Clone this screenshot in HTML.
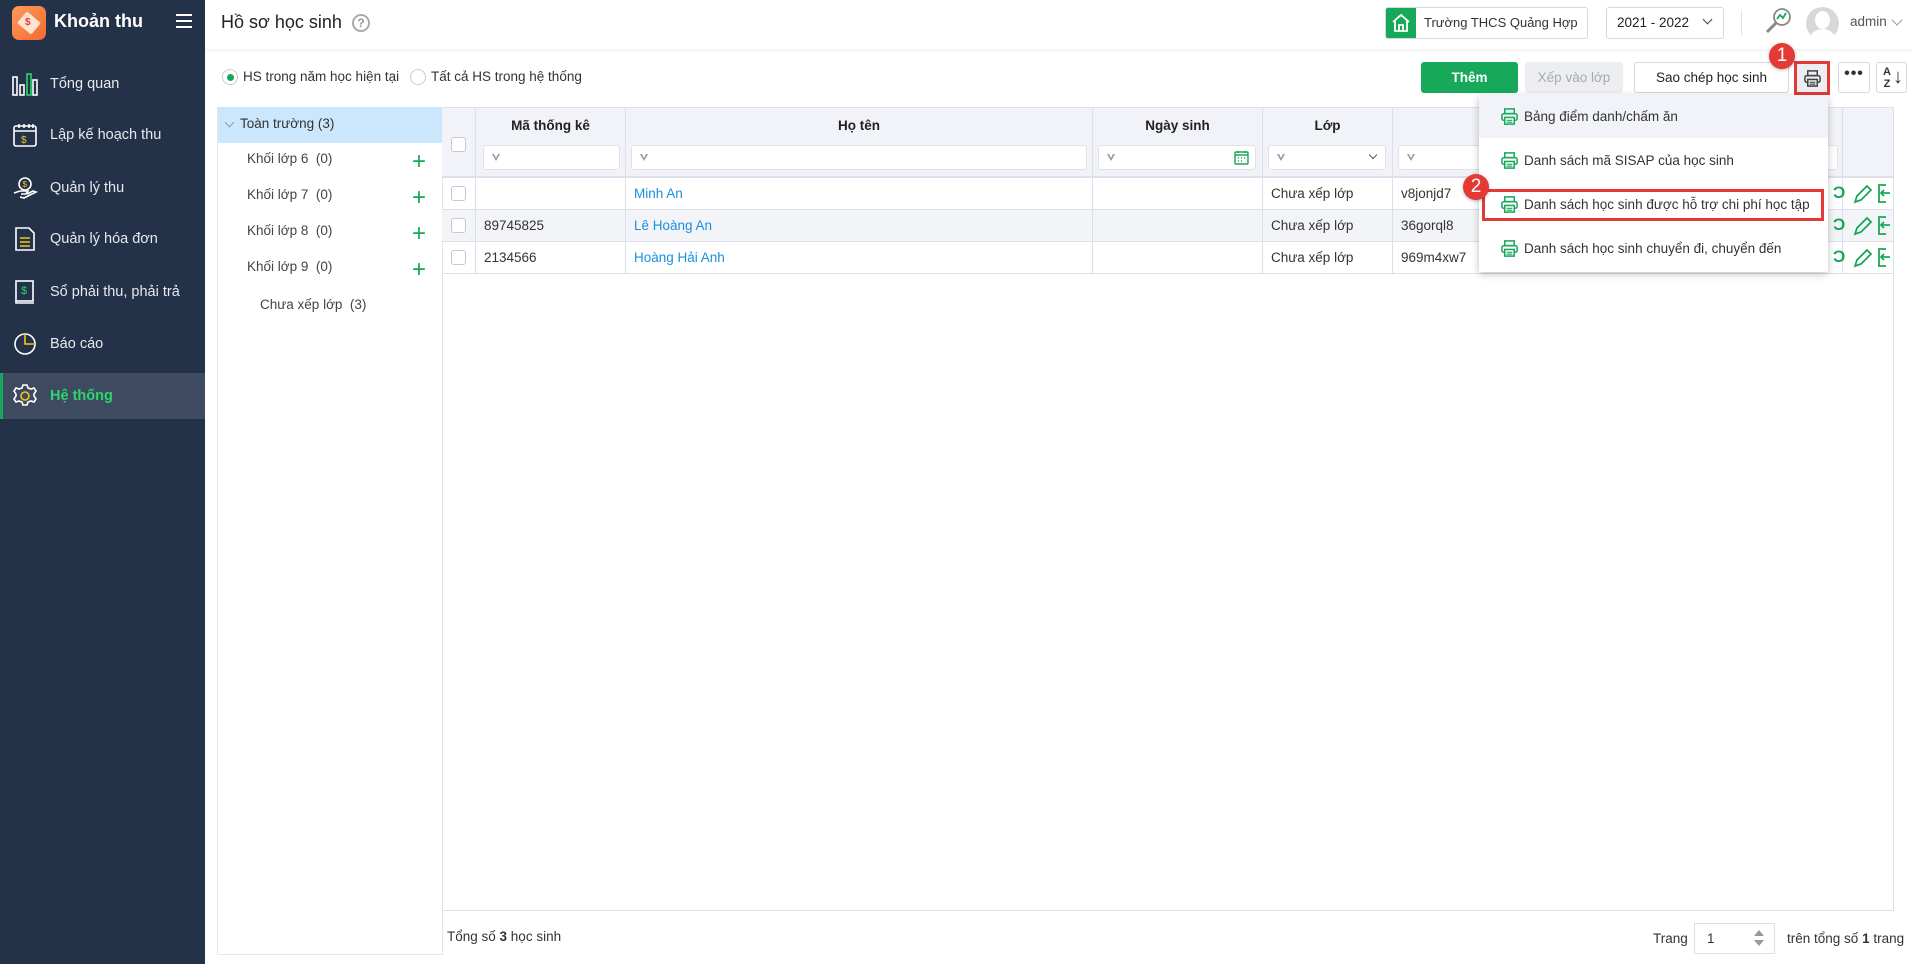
<!DOCTYPE html>
<html><head><meta charset="utf-8"><style>
*{box-sizing:border-box;margin:0;padding:0}
body{width:1913px;height:964px;overflow:hidden;font-family:"Liberation Sans","Noto Sans CJK SC",sans-serif;font-size:14px;color:#333;background:#fff;position:relative}
.abs{position:absolute}
#side{left:0;top:0;width:205px;height:964px;background:#243249}
.mi{position:absolute;left:0;width:205px;height:46px;color:#e6e9ee;font-size:14.5px;line-height:46px;padding-left:50px}
.mi svg{position:absolute;left:12px;top:10px}
.mi.act{background:#3d4a5f;color:#2ed46e;font-weight:bold;border-left:3px solid #17a85a}
#hdr{left:205px;top:0;width:1708px;height:49px;background:#fff;box-shadow:0 2px 4px rgba(0,0,0,.06)}
.btn{position:absolute;height:31px;border-radius:3px;font-size:13.5px;text-align:center;line-height:31px}
.th{position:absolute;top:0;height:69px;border-right:1px solid #dde0ea;text-align:center;font-weight:bold;font-size:13.5px;padding-top:10px;color:#222}
.flt{position:absolute;top:37px;height:25px;border:1px solid #dfe2ea;border-radius:3px;background:#fff}
.flt:before{content:"";position:absolute;left:8px;top:8px;border-left:4px solid transparent;border-right:4px solid transparent;border-top:7px solid #999}
.flt:after{content:"";position:absolute;left:10px;top:8px;border-left:2px solid transparent;border-right:2px solid transparent;border-top:4px solid #fff}
.row{position:absolute;left:0;width:1451px;height:32px;border-bottom:1px solid #dde0ea;font-size:13.5px;line-height:32px}
.c{position:absolute;top:0;height:31px;border-right:1px solid #dde0ea;padding-left:8px}
.cb{position:absolute;width:15px;height:15px;border:1px solid #c5c8d0;border-radius:3px;background:#fff}
.plus{position:absolute;left:194px;color:#17a85a;font-size:24px;line-height:20px;font-weight:300}
.dd{height:43px;position:absolute;left:0;width:349px;line-height:43px;padding-left:45px;font-size:13.5px;color:#333}
.dd svg{position:absolute;left:21px;top:12px}
.badge{position:absolute;width:26px;height:26px;border-radius:50%;background:#e53935;color:#fff;font-size:19px;text-align:center;line-height:26px;box-shadow:0 1px 3px rgba(0,0,0,.3)}
</style></head><body>
<svg width="0" height="0" style="position:absolute"><defs>
<symbol id="pr" viewBox="0 0 20 20"><rect x="5" y="2" width="10" height="5" fill="none" stroke="#17a85a" stroke-width="1.6"/><rect x="2" y="7" width="16" height="7" rx="2" fill="none" stroke="#17a85a" stroke-width="1.6"/><rect x="5" y="11" width="10" height="7" fill="#fff" stroke="#17a85a" stroke-width="1.6"/><path d="M7 14h6M7 16h6" stroke="#17a85a" stroke-width="1.2"/></symbol>
</defs></svg>

<div id="side" class="abs">
  <div class="abs" style="left:12px;top:6px;width:34px;height:34px;border-radius:7px;background:linear-gradient(135deg,#ff9a5a,#f26a2e)">
    <div class="abs" style="left:7px;top:10px;width:20px;height:14px;background:#ffe3d0;transform:skewY(-10deg) rotate(45deg);border-radius:2px"></div>
    <div class="abs" style="left:13px;top:11px;color:#e53935;font-size:10px;font-weight:bold">$</div>
  </div>
  <div class="abs" style="left:54px;top:11px;color:#fff;font-weight:bold;font-size:18px">Khoản thu</div>
  <div class="abs" style="left:176px;top:14px;width:16px;height:2px;background:#fff;box-shadow:0 6px 0 #fff,0 12px 0 #fff"></div>
  <div class="mi" style="top:61px"><svg width="26" height="26" viewBox="0 0 26 26" fill="none" stroke="#fff" stroke-width="1.6"><rect x="1" y="6" width="4" height="18"/><rect x="8" y="14" width="4" height="10"/><rect x="15" y="3" width="4" height="21" stroke="#2ed46e"/><rect x="21" y="9" width="4" height="15"/></svg>Tổng quan</div>
  <div class="mi" style="top:112px"><svg width="26" height="26" viewBox="0 0 26 26" fill="none" stroke="#fff" stroke-width="1.6"><rect x="2" y="4" width="22" height="20" rx="2"/><path d="M2 9h22M7 2v4M12 2v4M17 2v4M21 2v4"/><text x="9" y="21" font-size="10" fill="#f5c518" stroke="none" font-family="Liberation Sans">$</text></svg>Lập kế hoạch thu</div>
  <div class="mi" style="top:165px"><svg width="26" height="26" viewBox="0 0 26 26" fill="none" stroke="#fff" stroke-width="1.6"><circle cx="13" cy="9" r="6"/><path d="M2 18l6-2h8l-2 3H9M8 22l4 1 12-6-3-1-6 3"/><text x="10.5" y="12" font-size="8" fill="#f5c518" stroke="none">$</text></svg>Quản lý thu</div>
  <div class="mi" style="top:216px"><svg width="26" height="26" viewBox="0 0 26 26" fill="none" stroke="#fff" stroke-width="1.6"><path d="M4 2h13l5 5v17H4z"/><path d="M8 12h10M8 16h10M8 20h10" stroke="#f5c518"/></svg>Quản lý hóa đơn</div>
  <div class="mi" style="top:269px"><svg width="26" height="26" viewBox="0 0 26 26" fill="none" stroke="#fff" stroke-width="1.6"><rect x="4" y="2" width="17" height="20"/><path d="M4 22v2h18"/><text x="9" y="15" font-size="11" fill="#2ed46e" stroke="none">$</text></svg>Sổ phải thu, phải trả</div>
  <div class="mi" style="top:321px"><svg width="26" height="26" viewBox="0 0 26 26" fill="none" stroke="#fff" stroke-width="1.6"><circle cx="13" cy="13" r="10"/><path d="M13 3v10h10" stroke="#f5c518"/></svg>Báo cáo</div>
  <div class="mi act" style="top:373px;padding-left:47px"><svg width="26" height="26" viewBox="0 0 26 26" fill="none" stroke="#fff" stroke-width="1.6" style="left:9px"><path d="M11 2h4l1 3 3 1 3-1 2 3-2 3v2l2 3-2 3-3-1-3 1-1 3h-4l-1-3-3-1-3 1-2-3 2-3v-2l-2-3 2-3 3 1 3-1z"/><circle cx="13" cy="13" r="4" stroke="#f5c518"/></svg>Hệ thống</div>
</div>

<div id="hdr" class="abs">
  <div class="abs" style="left:16px;top:12px;font-size:18px;color:#222">Hồ sơ học sinh</div>
  <div class="abs" style="left:147px;top:14px;width:18px;height:18px;border:2px solid #aaa;border-radius:50%;color:#999;font-size:12px;text-align:center;line-height:14px;font-weight:bold">?</div>
  <div class="abs" style="left:1180px;top:7px;width:203px;height:32px;border:1px solid #d5d8de;border-radius:3px">
    <div class="abs" style="left:0;top:0;width:30px;height:30px;background:#17a85a;border-radius:2px 0 0 2px"><svg width="30" height="30" viewBox="0 0 30 30" fill="none" stroke="#fff" stroke-width="1.8"><path d="M7 14l8-7 8 7M9 12v11h12V12M13 23v-6h4v6"/></svg></div>
    <div class="abs" style="left:38px;top:7px;font-size:13px;white-space:nowrap">Trường THCS Quảng Hợp</div>
  </div>
  <div class="abs" style="left:1401px;top:7px;width:118px;height:32px;border:1px solid #d5d8de;border-radius:3px;font-size:13.5px;padding:7px 0 0 10px;color:#222">2021 - 2022<span class="abs" style="right:12px;top:8px;width:7px;height:7px;border-right:1.8px solid #444;border-bottom:1.8px solid #444;transform:rotate(45deg)"></span></div>
  <div class="abs" style="left:1536px;top:10px;width:1px;height:26px;background:#e3e5ea"></div>
  <svg class="abs" style="left:1558px;top:6px" width="30" height="30" viewBox="0 0 30 30" fill="none"><circle cx="19" cy="11" r="8" stroke="#888" stroke-width="1.8"/><path d="M13 17l-9 9" stroke="#888" stroke-width="3"/><path d="M14 13l3-4 3 3 3-5" stroke="#17a85a" stroke-width="1.8"/></svg>
  <div class="abs" style="left:1601px;top:7px;width:33px;height:33px;border-radius:50%;background:#d8d8d8;overflow:hidden"><div class="abs" style="left:9px;top:4px;width:15px;height:18px;border-radius:50%;background:#fff"></div><div class="abs" style="left:4px;top:22px;width:25px;height:20px;border-radius:50%;background:#fff"></div></div>
  <div class="abs" style="left:1645px;top:14px;font-size:13.5px;color:#555">admin</div>
  <div class="abs" style="left:1688px;top:16px;width:8px;height:8px;border-right:1.5px solid #999;border-bottom:1.5px solid #999;transform:rotate(45deg)"></div>
</div>

<div class="abs" style="left:222px;top:69px;width:16px;height:16px;border:1px solid #ccc;border-radius:50%"><div class="abs" style="left:4px;top:4px;width:7px;height:7px;border-radius:50%;background:#17a85a"></div></div>
<div class="abs" style="left:243px;top:69px;font-size:13.5px">HS trong năm học hiện tại</div>
<div class="abs" style="left:410px;top:69px;width:16px;height:16px;border:1px solid #ccc;border-radius:50%"></div>
<div class="abs" style="left:431px;top:69px;font-size:13.5px">Tất cả HS trong hệ thống</div>

<div class="btn" style="left:1421px;top:62px;width:97px;background:#17a85a;color:#fff;font-weight:bold">Thêm</div>
<div class="btn" style="left:1525px;top:62px;width:98px;background:#eceef1;color:#aaa">Xếp vào lớp</div>
<div class="btn" style="left:1634px;top:62px;width:155px;border:1px solid #d5d8de;color:#222;line-height:29px">Sao chép học sinh</div>
<div class="abs" style="left:1794px;top:61px;width:36px;height:34px;border:3px solid #e53935;background:#eceef1"><svg class="abs" style="left:6px;top:5px" width="19" height="19" viewBox="0 0 20 20"><rect x="5" y="2" width="10" height="5" fill="none" stroke="#444" stroke-width="1.6"/><rect x="2" y="7" width="16" height="7" rx="2" fill="none" stroke="#444" stroke-width="1.6"/><rect x="5" y="11" width="10" height="7" fill="#eceef1" stroke="#444" stroke-width="1.6"/><path d="M7 14h6M7 16h6" stroke="#444" stroke-width="1.2"/></svg></div>
<div class="btn" style="left:1838px;top:62px;width:32px;border:1px solid #d5d8de;font-size:16px;line-height:22px;letter-spacing:1px;font-weight:bold">•••</div>
<div class="btn" style="left:1876px;top:62px;width:31px;border:1px solid #d5d8de"><span class="abs" style="left:6px;top:3px;font-size:11px;line-height:12px;font-weight:bold">A<br>Z</span><span class="abs" style="left:16px;top:0px;font-size:20px;line-height:28px">↓</span></div>
<div class="badge" style="left:1769px;top:43px">1</div>

<div class="abs" style="left:217px;top:107px;width:226px;height:848px;border:1px solid #e3e5ea;border-top:none">
  <div class="abs" style="left:0;top:0;width:225px;height:36px;background:#cce6fb"></div>
  <div class="abs" style="left:8px;top:12px;width:7px;height:7px;border-right:1.5px solid #999;border-bottom:1.5px solid #999;transform:rotate(45deg)"></div>
  <div class="abs" style="left:22px;top:9px;font-size:13.5px">Toàn trường (3)</div>
  <div class="abs" style="left:29px;top:44px;font-size:13.5px;color:#444">Khối lớp 6&nbsp; (0)</div><div class="plus" style="top:45px">+</div>
  <div class="abs" style="left:29px;top:80px;font-size:13.5px;color:#444">Khối lớp 7&nbsp; (0)</div><div class="plus" style="top:81px">+</div>
  <div class="abs" style="left:29px;top:116px;font-size:13.5px;color:#444">Khối lớp 8&nbsp; (0)</div><div class="plus" style="top:117px">+</div>
  <div class="abs" style="left:29px;top:152px;font-size:13.5px;color:#444">Khối lớp 9&nbsp; (0)</div><div class="plus" style="top:153px">+</div>
  <div class="abs" style="left:42px;top:190px;font-size:13.5px;color:#444">Chưa xếp lớp&nbsp; (3)</div>
</div>

<div class="abs" style="left:442px;top:107px;width:1452px;height:804px;border:1px solid #dde0ea;border-left:none">
  <div class="abs" style="left:0;top:0;width:1451px;height:70px;background:#f1f3f8;border-bottom:2px solid #dde0ea"></div>
  <div class="th" style="left:0;width:34px"><div class="cb" style="left:9px;top:29px"></div></div>
  <div class="th" style="left:34px;width:150px">Mã thống kê<div class="flt" style="left:7px;width:137px"></div></div>
  <div class="th" style="left:184px;width:467px">Họ tên<div class="flt" style="left:5px;width:456px"></div></div>
  <div class="th" style="left:651px;width:170px">Ngày sinh<div class="flt" style="left:5px;width:158px"><svg class="abs" style="right:6px;top:4px" width="15" height="15" viewBox="0 0 15 15" fill="none" stroke="#17a85a" stroke-width="1.4"><rect x="1" y="2" width="13" height="12" rx="1"/><path d="M1 5h13M4 1v2M11 1v2M4 8h1M7 8h1M10 8h1M4 11h1M7 11h1"/></svg></div></div>
  <div class="th" style="left:821px;width:130px">Lớp<div class="flt" style="left:5px;width:118px"><span class="abs" style="right:9px;top:6px;width:6px;height:6px;border-right:1.5px solid #555;border-bottom:1.5px solid #555;transform:rotate(45deg)"></span></div></div>
  <div class="th" style="left:951px;width:450px;border-right:none">Mã SISAP<div class="flt" style="left:5px;width:440px"></div></div>
  <div class="th" style="left:1400px;width:51px;border-left:1px solid #dde0ea;border-right:none"></div>

  <div class="row" style="top:70px"><div class="c" style="left:0;width:34px"><div class="cb" style="left:9px;top:8px"></div></div><div class="c" style="left:34px;width:150px"></div><div class="c" style="left:184px;width:467px;color:#1a8fe0">Minh An</div><div class="c" style="left:651px;width:170px"></div><div class="c" style="left:821px;width:130px">Chưa xếp lớp</div><div class="c" style="left:951px;width:450px">v8jonjd7</div></div>
  <div class="row" style="top:102px;background:#f3f4f8"><div class="c" style="left:0;width:34px"><div class="cb" style="left:9px;top:8px"></div></div><div class="c" style="left:34px;width:150px">89745825</div><div class="c" style="left:184px;width:467px;color:#1a8fe0">Lê Hoàng An</div><div class="c" style="left:651px;width:170px"></div><div class="c" style="left:821px;width:130px">Chưa xếp lớp</div><div class="c" style="left:951px;width:450px">36gorql8</div></div>
  <div class="row" style="top:134px"><div class="c" style="left:0;width:34px"><div class="cb" style="left:9px;top:8px"></div></div><div class="c" style="left:34px;width:150px">2134566</div><div class="c" style="left:184px;width:467px;color:#1a8fe0">Hoàng Hải Anh</div><div class="c" style="left:651px;width:170px"></div><div class="c" style="left:821px;width:130px">Chưa xếp lớp</div><div class="c" style="left:951px;width:450px">969m4xw7</div></div>
</div>
<div class="abs" style="left:1833px;top:177px;font-size:17px;color:#17a85a;font-weight:bold;line-height:32px">Ɔ<br>Ɔ<br>Ɔ</div>
<svg class="abs" style="left:1852px;top:177px" width="42" height="96" viewBox="0 0 42 96" fill="none" stroke="#17a85a" stroke-width="1.8">
<g id="ac"><path d="M3 25l2-6 10-10 4 4-10 10zM3 25l6-2"/><path d="M34 8h-7v17h7M38 16h-9M32 13l-3 3 3 3"/></g>
<use href="#ac" y="32"/><use href="#ac" y="64"/></svg>

<div class="abs" style="left:447px;top:929px;font-size:13.5px">Tổng số <b>3</b> học sinh</div>
<div class="abs" style="left:1653px;top:931px;font-size:13.5px">Trang</div>
<div class="abs" style="left:1694px;top:923px;width:81px;height:31px;border:1px solid #dde0ea;font-size:13.5px;padding:7px 0 0 12px">1<span class="abs" style="right:10px;top:6px;border:5px solid transparent;border-bottom:6px solid #999;border-top:none"></span><span class="abs" style="right:10px;top:16px;border:5px solid transparent;border-top:6px solid #999;border-bottom:none"></span></div>
<div class="abs" style="left:1787px;top:931px;font-size:13.5px">trên tổng số <b>1</b> trang</div>

<div class="abs" style="left:1479px;top:95px;width:349px;height:177px;background:#fff;box-shadow:0 2px 8px rgba(0,0,0,.25);border-radius:2px">
  <div class="dd" style="top:0;background:#f1f3f8"><svg width="19" height="19"><use href="#pr"/></svg>Bảng điểm danh/chấm ăn</div>
  <div class="dd" style="top:44px"><svg width="19" height="19"><use href="#pr"/></svg>Danh sách mã SISAP của học sinh</div>
  <div class="dd" style="top:88px"><svg width="19" height="19"><use href="#pr"/></svg>Danh sách học sinh được hỗ trợ chi phí học tập</div>
  <div class="abs" style="left:3px;top:94px;width:342px;height:32px;border:3px solid #e53935"></div>
  <div class="dd" style="top:132px"><svg width="19" height="19"><use href="#pr"/></svg>Danh sách học sinh chuyển đi, chuyển đến</div>
</div>
<div class="badge" style="left:1463px;top:174px">2</div>
</body></html>
